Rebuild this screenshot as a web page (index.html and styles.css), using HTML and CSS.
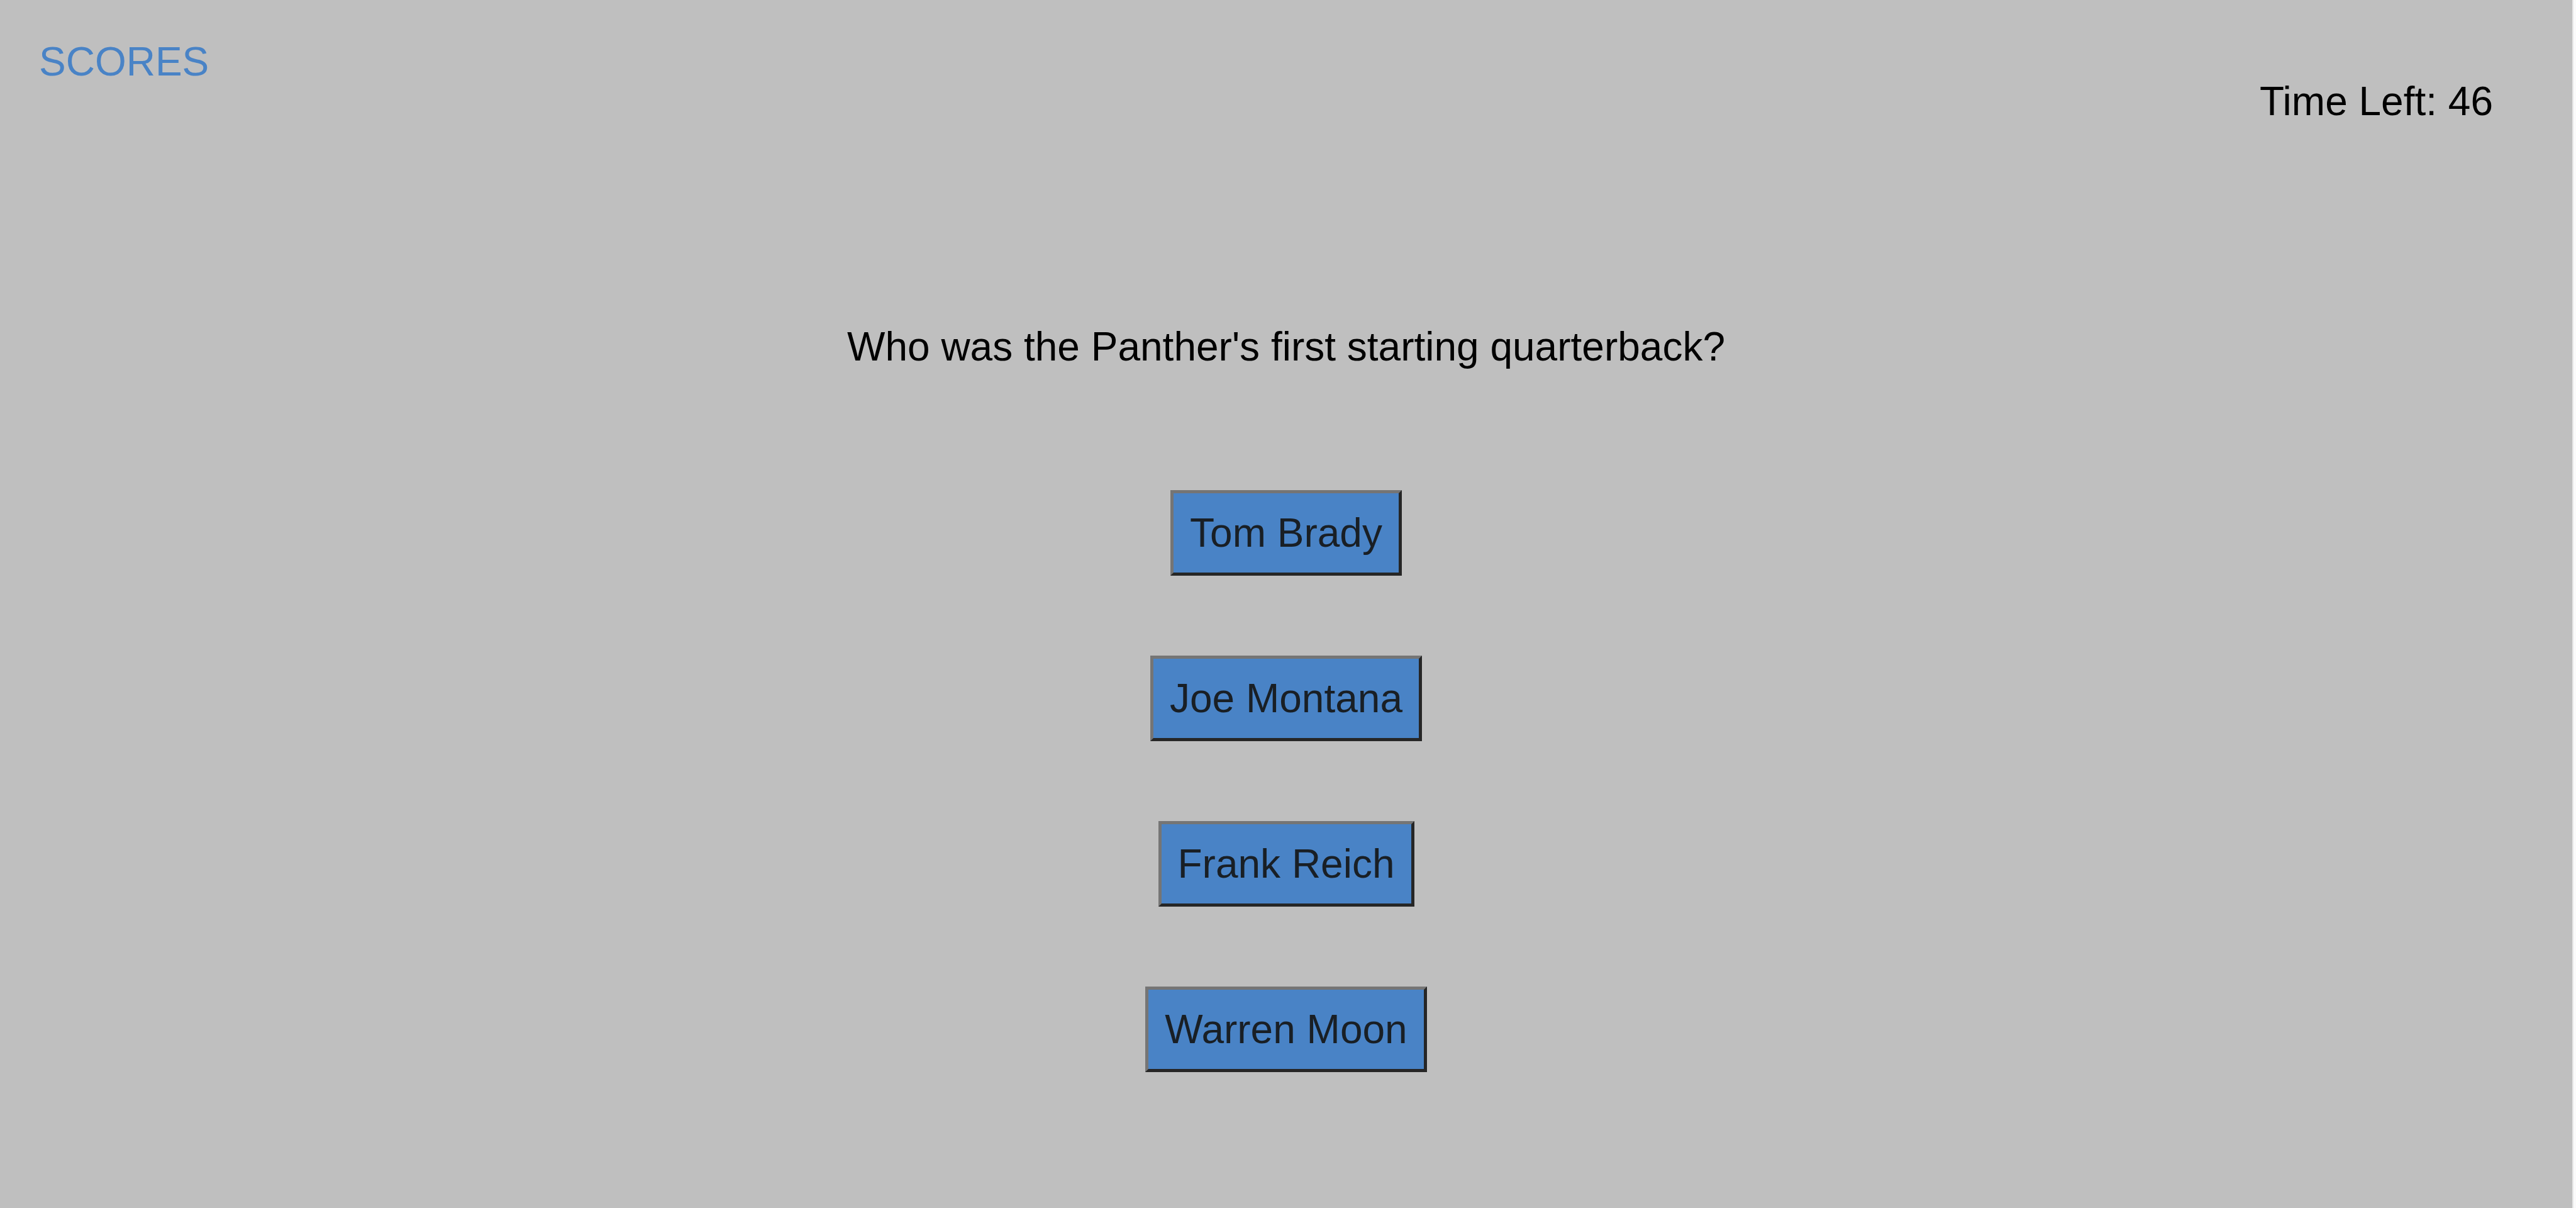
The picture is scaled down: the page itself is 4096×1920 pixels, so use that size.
FILE: index.html
```html
<!DOCTYPE html>
<html lang="en">
<head>
  <meta charset="utf-8">
  <title>Football Quiz</title>
  <link rel="stylesheet" href="styles.css">
</head>
<body>
  <div class="page">
    <header class="topbar">
      <a class="scores" href="#scores">SCORES</a>
      <div class="timer">Time Left: 46</div>
    </header>
    <main class="quiz">
      <p class="question">Who was the Panther's first starting quarterback?</p>
      <div class="answers">
        <button class="answer" type="button">Tom Brady</button>
        <button class="answer" type="button">Joe Montana</button>
        <button class="answer" type="button">Frank Reich</button>
        <button class="answer" type="button">Warren Moon</button>
      </div>
    </main>
  </div>
</body>
</html>
```
FILE: styles.css
```css
* {
  box-sizing: border-box;
}

body {
  margin: 0;
  padding-right: 4px;
  background: #fafafa;
  color: #000;
  font-family: Arial, "Liberation Sans", sans-serif;
  font-size: 64px;
  line-height: 72px;
}

.page {
  min-height: 100vh;
  border-right: 2px solid #e6e6e6;
  background: #bfbfbf;
}

.topbar {
  display: flex;
  justify-content: space-between;
  align-items: flex-start;
  padding: 62px 126px 0 62px;
}

.scores {
  color: #4983c6;
  text-decoration: none;
}

.timer {
  margin-top: 63px;
}

.quiz {
  display: flex;
  flex-direction: column;
  align-items: center;
  gap: 192px;
  padding-top: 318px;
}

.question {
  margin: 0;
}

.answers {
  display: flex;
  flex-direction: column;
  align-items: center;
  gap: 127px;
}

.answer {
  padding: 27px 26px;
  border: 5px solid;
  border-color: #757575 #262626 #262626 #757575;
  background: #4983c6;
  color: #191f25;
  font: inherit;
}
```
